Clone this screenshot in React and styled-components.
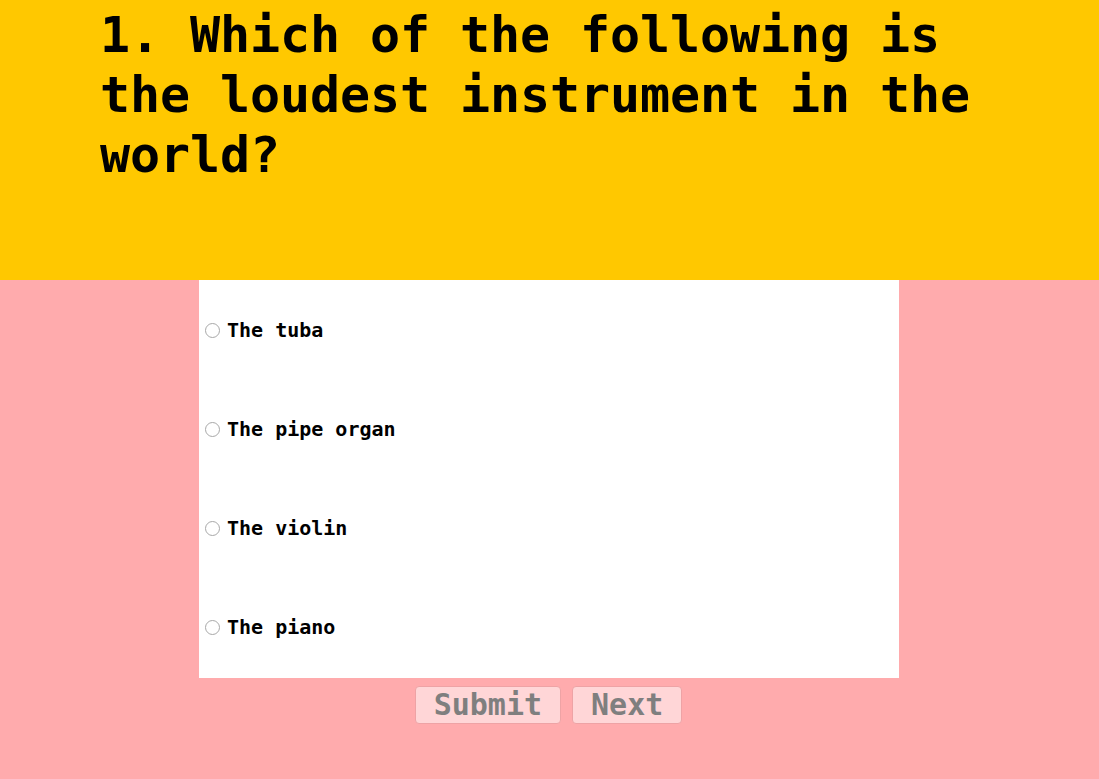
import React, { useState } from "react";
import styled, { createGlobalStyle } from "styled-components";

const GlobalStyle = createGlobalStyle`
  html, body {
    margin: 0;
    padding: 0;
    background: #ffabad;
  }
  body {
    font-family: "DejaVu Sans Mono", "Liberation Mono", monospace;
  }
`;

const options = ["The tuba", "The pipe organ", "The violin", "The piano"];

const App = () => {
    const [picked, setPicked] = useState(null);

    return (
        <Page>
            <GlobalStyle />
            <Header>
                <Question>1. Which of the following is the loudest instrument in the world?</Question>
            </Header>
            <Body>
                <Card>
                    {options.map((opt, index) => (
                        <Option key={index}>
                            <Radio
                                type="radio"
                                name="answer"
                                checked={picked === index}
                                onChange={() => setPicked(index)}
                            />
                            <span>{opt}</span>
                        </Option>
                    ))}
                </Card>
                <Buttons>
                    <Button disabled>Submit</Button>
                    <Button disabled>Next</Button>
                </Buttons>
            </Body>
        </Page>
    );
};

const Page = styled.div`
    min-height: 779px;
    background: #ffabad;
`;

const Header = styled.header`
    height: 280px;
    box-sizing: border-box;
    background: #ffc800;
    padding: 5px 100px 0 100px;
`;

const Question = styled.h1`
    margin: 0;
    font-size: 50px;
    line-height: 60px;
    font-weight: bold;
    letter-spacing: -0.1px;
    color: #000;
`;

const Body = styled.main`
    display: flex;
    flex-direction: column;
    align-items: center;
`;

const Card = styled.div`
    width: 700px;
    margin-right: 1px;
    background: #fff;
    display: flex;
    flex-direction: column;
    padding-bottom: 2px;
`;

const Option = styled.label`
    height: 99px;
    display: flex;
    align-items: center;
    font-size: 20px;
    font-weight: bold;
    color: #000;
    cursor: pointer;
`;

const Radio = styled.input`
    appearance: none;
    box-sizing: border-box;
    width: 15px;
    height: 15px;
    margin: 1px 7px 0 6px;
    border: 1px solid #a8a8a8;
    border-radius: 50%;
    background: #fff;

    &:checked {
        border: 4px solid #3b82f6;
    }
`;

const Buttons = styled.div`
    display: flex;
    gap: 11px;
    margin-top: 8px;
    margin-right: 2px;
`;

const Button = styled.button`
    font-family: "DejaVu Sans Mono", "Liberation Mono", monospace;
    font-size: 30px;
    font-weight: bold;
    color: #7f7f7f;
    background: #ffd6d7;
    border: 1px solid #eea3a5;
    border-radius: 4px;
    padding: 0 18px;
    height: 38px;
    line-height: 36px;
`;

export default App;
